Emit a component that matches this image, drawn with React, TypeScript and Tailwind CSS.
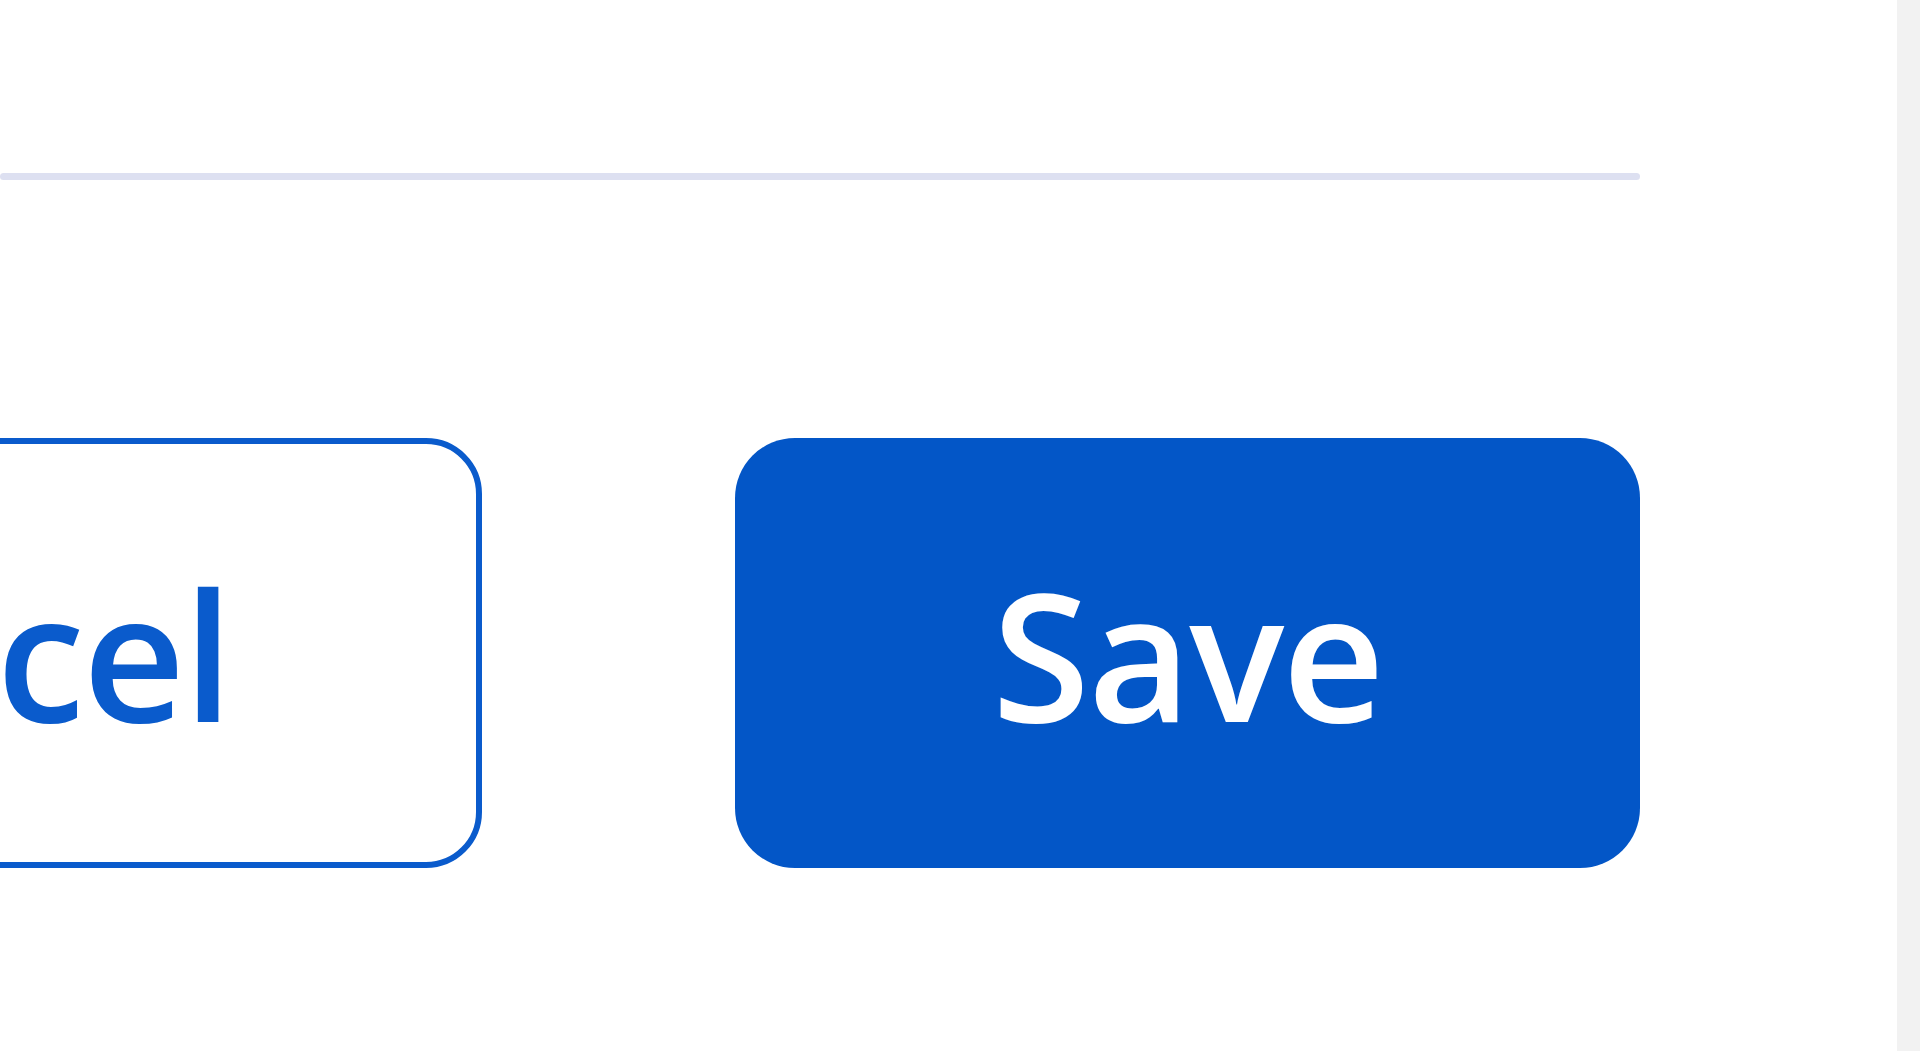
export default function App() {
  return (
    <div className="flex h-[1051px] w-[1920px] overflow-hidden bg-white font-['Open_Sans','Noto_Sans',sans-serif]">
      {/* dialog footer, zoomed */}
      <div className="flex min-w-0 flex-1 flex-col pr-[257px] pt-[173px]">
        <div className="h-[7px] w-full rounded-full bg-[#dde0f1]" />

        <div className="mt-[258px] flex justify-end gap-[253px]">
          <button className="flex h-[430px] shrink-0 items-center justify-center rounded-[56px] border-[6px] border-[#0a5bcc] bg-white pl-[266px] pr-[245px] text-[178px] font-semibold leading-none tracking-[-2px] text-[#0a5bcc]">
            Cancel
          </button>
          <button className="flex h-[430px] w-[905px] shrink-0 items-center justify-center rounded-[60px] bg-[#0356c7] text-[178px] font-semibold leading-none tracking-[-2px] text-white">
            Save
          </button>
        </div>
      </div>

      {/* page edge */}
      <div className="w-[23px] shrink-0 bg-[#f2f2f2]" />
    </div>
  );
}
